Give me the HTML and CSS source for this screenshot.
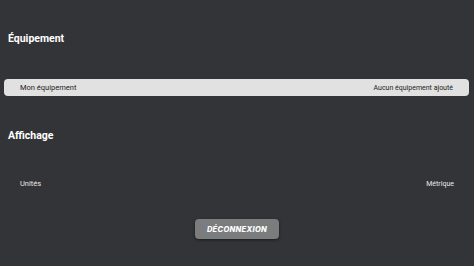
FILE: index.html
```html
<!DOCTYPE html>
<html lang="fr">
<head>
<meta charset="utf-8">
<link rel="stylesheet" href="styles.css">
</head>
<body>
<div class="page">
  <section class="section">
    <h2 class="title">Équipement</h2>
    <div class="row row-card">
      <span class="label">Mon équipement</span>
      <span class="value">Aucun équipement ajouté</span>
    </div>
  </section>
  <section class="section section-display">
    <h2 class="title">Affichage</h2>
    <div class="row row-plain">
      <span class="label">Unités</span>
      <span class="value">Métrique</span>
    </div>
  </section>
  <div class="actions">
    <button class="logout">DÉCONNEXION</button>
  </div>
</div>
</body>
</html>
```
FILE: styles.css
```css
html, body {
  margin: 0;
  padding: 0;
  background: #333437;
}
body {
  width: 474px;
  height: 266px;
  overflow: hidden;
  font-family: Roboto, "Liberation Sans", sans-serif;
}
.page {
  display: flex;
  flex-direction: column;
  padding: 32px 4px 0 4px;
}
.title {
  margin: 0;
  padding-left: 4px;
  font-size: 10.5px;
  font-weight: 700;
  color: #ffffff;
  line-height: 14px;
}
.row {
  display: flex;
  justify-content: space-between;
  align-items: center;
  font-size: 7.5px;
  padding: 0 16px;
  height: 17px;
}
.value {
  font-size: 7px;
}
.row-card {
  margin-top: 33px;
  background: #e1e1e1;
  border-radius: 4px;
  color: #222;
  margin-right: 1px;
}
.section-display {
  margin-top: 33px;
}
.row-plain {
  margin-top: 32px;
  color: #e8e8e8;
}
.actions {
  display: flex;
  justify-content: center;
  margin-top: 27px;
}
.logout {
  width: 84px;
  height: 20px;
  border: none;
  border-radius: 4px;
  background: #7b7c7e;
  color: #fff;
  font-family: Inter, "Liberation Sans", sans-serif;
  font-size: 7.5px;
  font-weight: 800;
  font-style: italic;
  letter-spacing: 0.3px;
  box-shadow: 0 1px 3px rgba(0,0,0,0.5);
  padding: 0;
}
```
